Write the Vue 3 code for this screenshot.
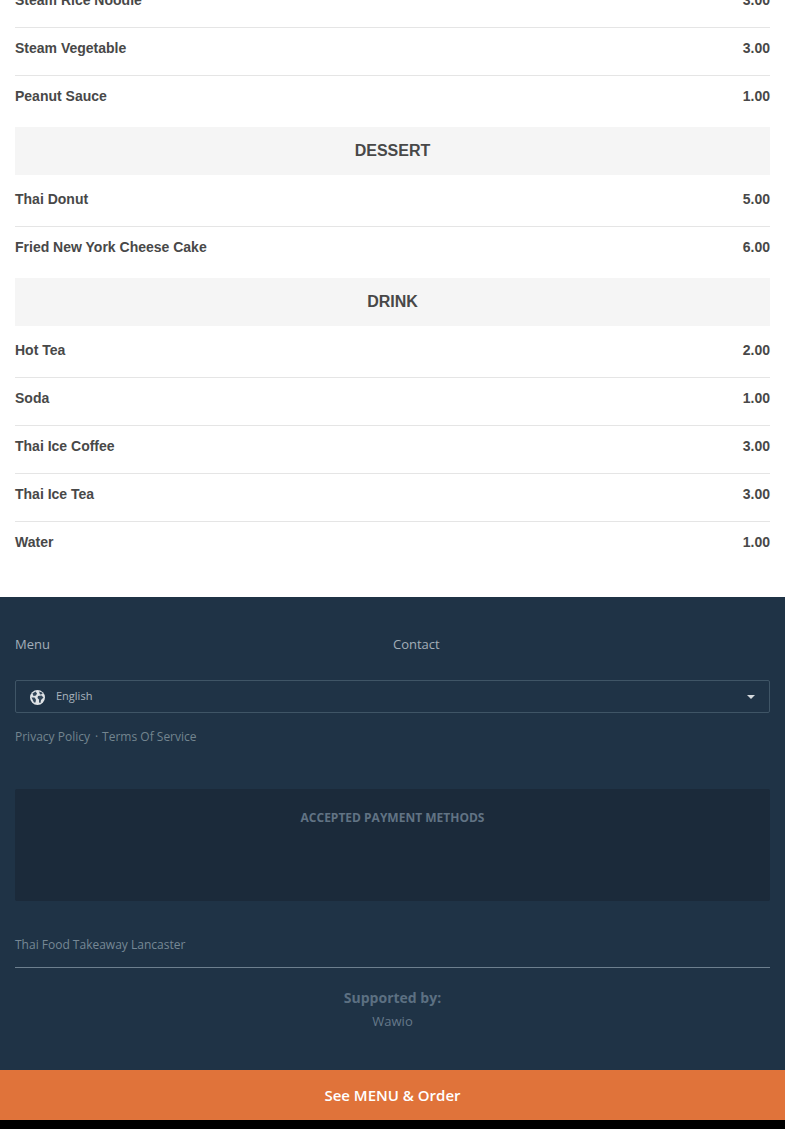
<script setup>
const groups = [
  { items: [['Steam Rice Noodle', '3.00'], ['Steam Vegetable', '3.00'], ['Peanut Sauce', '1.00']] },
  { title: 'DESSERT', items: [['Thai Donut', '5.00'], ['Fried New York Cheese Cake', '6.00']] },
  { title: 'DRINK', items: [['Hot Tea', '2.00'], ['Soda', '1.00'], ['Thai Ice Coffee', '3.00'], ['Thai Ice Tea', '3.00'], ['Water', '1.00']] }
]
</script>

<template>
  <div class="page">
    <main class="menu">
      <section v-for="(g, i) in groups" :key="i">
        <h2 v-if="g.title" class="cat">{{ g.title }}</h2>
        <ul class="list">
          <li v-for="it in g.items" :key="it[0]" class="row">
            <span>{{ it[0] }}</span><span>{{ it[1] }}</span>
          </li>
        </ul>
      </section>
    </main>
    <footer class="foot">
      <nav class="links">
        <a>Menu</a>
        <a>Contact</a>
      </nav>
      <div class="select">
        <svg class="globe" width="15" height="15" viewBox="0 0 15 15">
          <circle cx="7.5" cy="7.5" r="7.5" fill="#dfe3e6" />
          <path d="M2.5 3.5 5.5 1.5 7 3.5 6 5.5 3.5 6Z" fill="#33475a" />
          <path d="M9 1.5 12 2.5 12.5 4 10 4.5Z" fill="#33475a" />
          <path d="M8 6 11.5 5.5 13.5 7.5 11 10 10.5 13 9 12.5 9 9.5 7.5 8Z" fill="#33475a" />
          <path d="M1.5 7.5 4.5 7.5 6 9.5 5.5 12.5 4 12.5 3 10.5Z" fill="#33475a" />
        </svg>
        <span class="lang">English</span>
        <i class="caret"></i>
      </div>
      <div class="legal"><a>Privacy Policy</a><span class="dot">·</span><a>Terms Of Service</a></div>
      <div class="pay">ACCEPTED PAYMENT METHODS</div>
      <div class="name">Thai Food Takeaway Lancaster</div>
      <div class="support">
        <strong>Supported by:</strong>
        <a>Wawio</a>
      </div>
    </footer>
    <button class="cta">See MENU &amp; Order</button>
  </div>
</template>

<style>
html, body { margin: 0; background: #000; }
</style>

<style scoped>
.page { width: 785px; height: 1129px; overflow: hidden; background: #000; }
.menu { background: #fff; margin-top: -24px; padding: 0 15px 28px; font: bold 14px/20px "Liberation Sans", Arial, sans-serif; color: #484848; }
.cat { margin: 0; height: 48px; background: #f5f5f5; font: bold 16px/47px "Liberation Sans", Arial, sans-serif; text-align: center; color: #484848; }
.list { list-style: none; margin: 0; padding: 4px 0; }
.row { display: flex; justify-content: space-between; padding: 10px 0 17px; border-bottom: 1px solid #e5e5e5; }
.row:last-child { border-bottom: 0; }
section:last-child .list { padding-bottom: 0; }
.foot { background: #1f3346; height: 473px; padding: 0 15px; box-sizing: border-box; font-family: "Open Sans", sans-serif; color: #8796a3; overflow: hidden; }
.links { display: grid; grid-template-columns: 378px 1fr; padding-top: 38px; font-size: 13px; line-height: 18px; color: #a3aeb8; }
.select { display: flex; align-items: center; height: 33px; margin-top: 27px; padding: 0 14px; box-sizing: border-box; border: 1px solid #3f5566; border-radius: 2px; }
.globe { flex: none; margin-top: 2px; }
.lang { margin: -3px 0 0 11px; font-size: 11px; color: #a9b4bd; }
.caret { margin-left: auto; width: 0; height: 0; border: 4px solid transparent; border-top-color: #d5dade; border-bottom: 0; }
.legal { margin-top: 15px; font-size: 12px; line-height: 17px; color: #73858f; display: flex; }
.dot { margin: 0 4px 0 5px; }
.pay { margin-top: 44px; height: 112px; padding-top: 20px; box-sizing: border-box; background: #1b2a3a; border-radius: 2px; text-align: center; font-size: 12px; line-height: 17px; font-weight: 700; color: #617384; }
.name { margin-top: 35px; padding-bottom: 14px; border-bottom: 1px solid #6d7f8e; font-size: 12px; line-height: 17px; color: #768895; }
.support { margin-top: 20px; text-align: center; display: flex; flex-direction: column; }
.support strong { font-size: 14px; line-height: 20px; color: #5c7082; }
.support a { margin-top: 4px; font-size: 13px; line-height: 18px; color: #66798a; }
.cta { display: block; width: 100%; height: 50px; border: 0; padding: 0; background: #e0733a; color: #fff; font: 600 15px/50px "Open Sans", sans-serif; text-align: center; }
</style>
